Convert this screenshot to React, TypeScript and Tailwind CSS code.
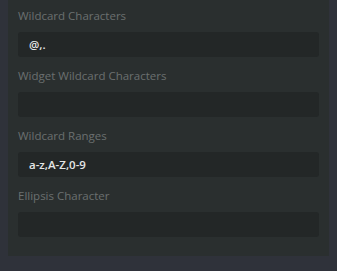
export default function App() {
  const fields = [
    { label: "Wildcard Characters", value: "@,." },
    { label: "Widget Wildcard Characters", value: "" },
    { label: "Wildcard Ranges", value: "a-z,A-Z,0-9" },
    { label: "Ellipsis Character", value: "" },
  ];
  return (
    <div className="w-[337px] h-[271px] bg-[#2f323a] px-2 overflow-hidden" style={{ fontFamily: '"Open Sans", sans-serif' }}>
      <div className="bg-[#2a2f2f] h-[256px] px-[10px] pt-[6px] flex flex-col">
        {fields.map((f) => (
          <div key={f.label} className="flex flex-col h-[60px]">
            <div className="h-[20px] text-[11.5px] leading-[20px] text-[#6b7070]">{f.label}</div>
            <div className="mt-[6px] h-[25px] rounded-[3px] bg-[#232727] px-[11px] text-[11.5px] leading-[25px] text-[#e4e6e6] font-semibold">
              {f.value}
            </div>
          </div>
        ))}
      </div>
    </div>
  );
}
